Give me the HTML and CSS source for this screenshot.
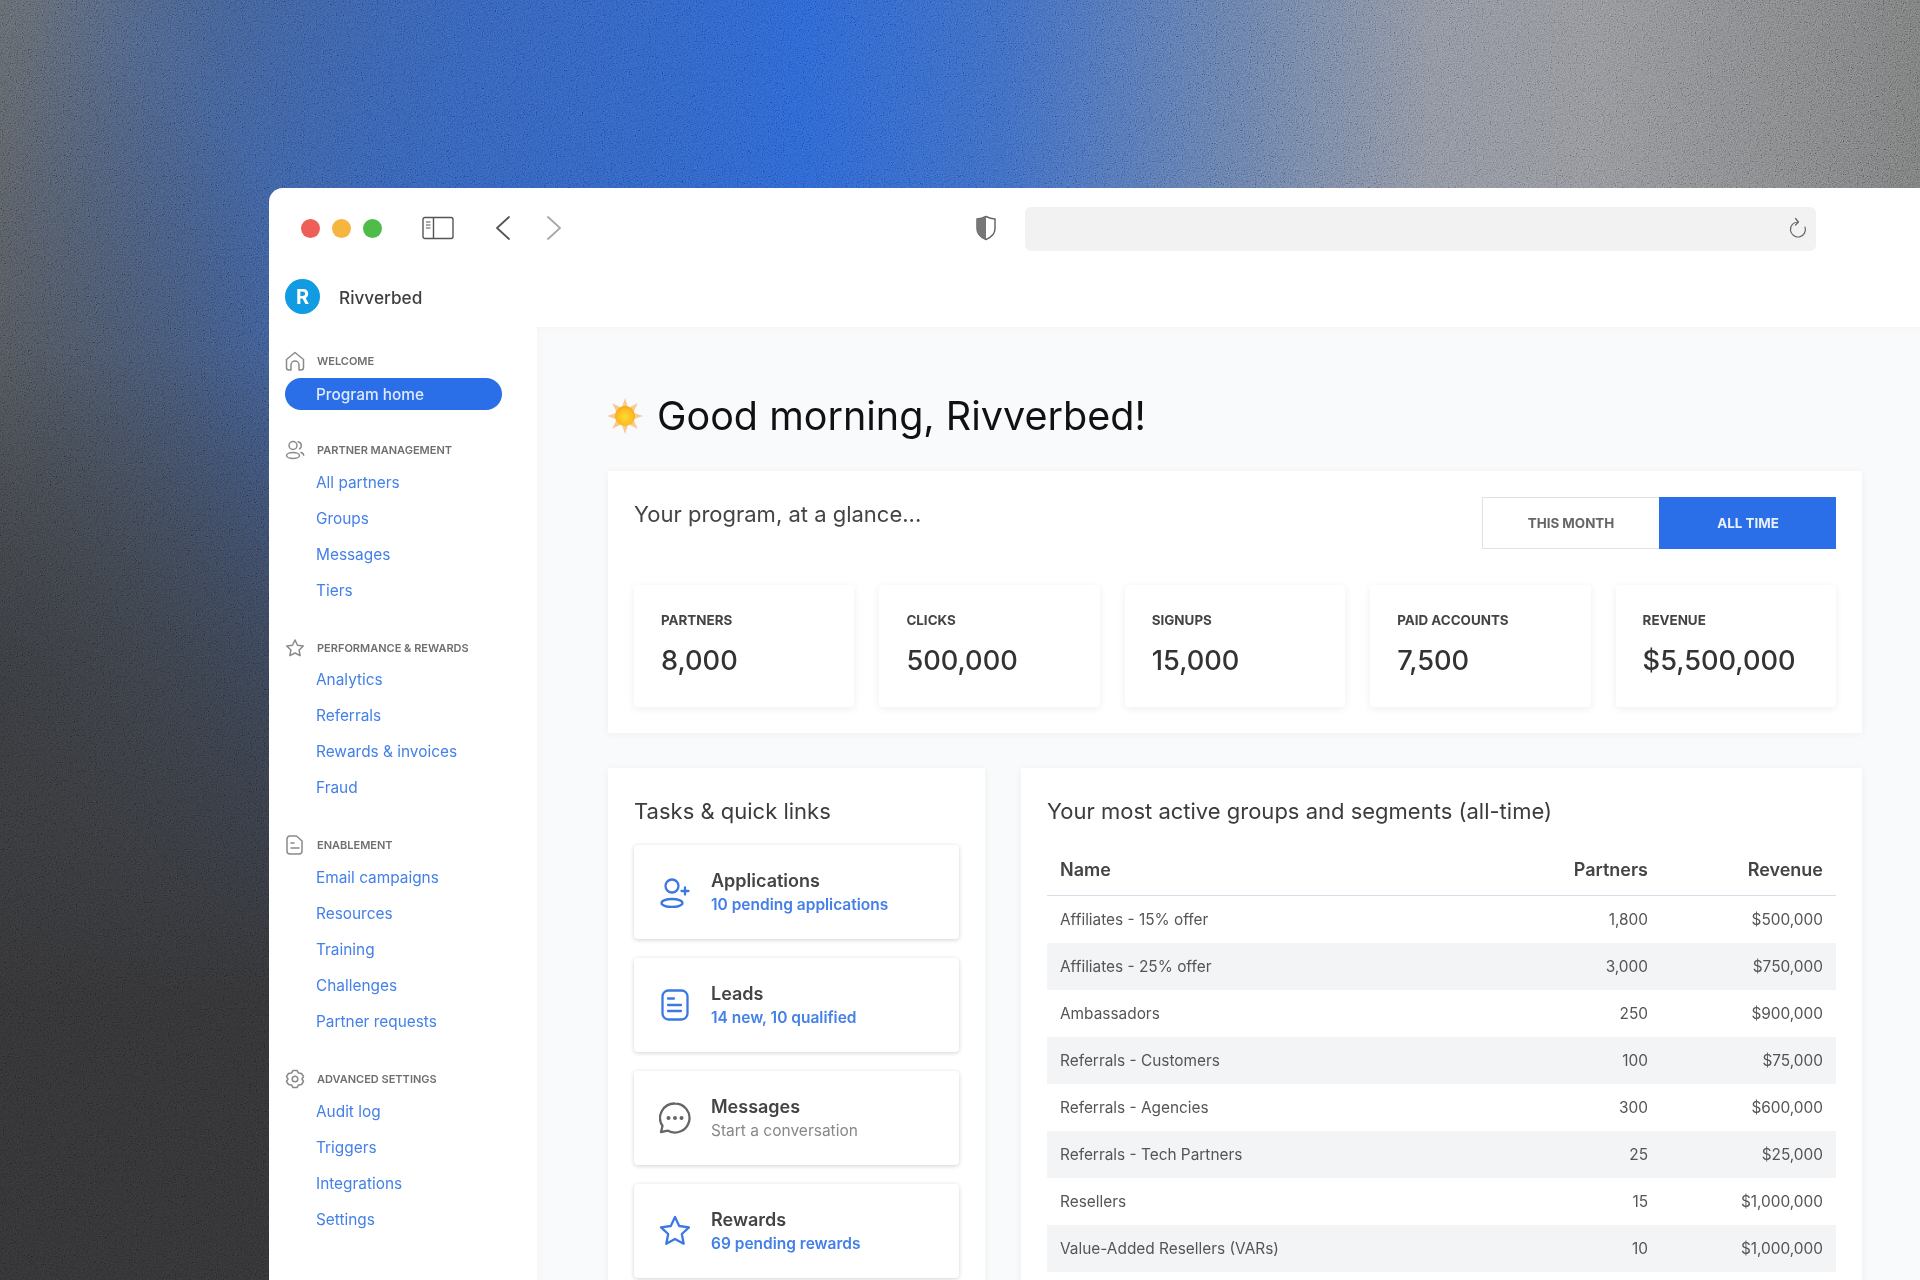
FILE: index.html
```html
<!DOCTYPE html>
<html lang="en">
<head>
<meta charset="utf-8">
<title>Rivverbed</title>
<link rel="stylesheet" href="styles.css">
</head>
<body>
<svg class="grain" width="1920" height="1280" aria-hidden="true"><filter id="n" x="0" y="0" width="100%" height="100%"><feTurbulence type="fractalNoise" baseFrequency="0.85" numOctaves="2" stitchTiles="stitch"/><feColorMatrix type="matrix" values=".7 .7 .7 0 -.72  .7 .7 .7 0 -.72  .7 .7 .7 0 -.72  0 0 0 0 1"/></filter><rect width="1920" height="1280" filter="url(#n)"/></svg>
<div class="window">
  <header class="titlebar">
    <span class="dot red"></span><span class="dot yellow"></span><span class="dot green"></span>
    <svg class="tb-sidebar" width="32" height="24" viewBox="0 0 32 24" fill="none" stroke="#555" stroke-width="1.4"><rect x="1" y="1.500" width="30" height="21" rx="2"/><path d="M11.500 1.500v21"/><path d="M4 6h4.500M4 9h4.500M4 12h4.500" stroke-width="1.200"/></svg>
    <svg class="tb-back" width="16" height="24" viewBox="0 0 16 24" fill="none" stroke="#555" stroke-width="1.800" stroke-linecap="round" stroke-linejoin="round"><path d="M14 1 2 12l12 11"/></svg>
    <svg class="tb-forward" width="16" height="24" viewBox="0 0 16 24" fill="none" stroke="#a8a8a8" stroke-width="1.800" stroke-linecap="round" stroke-linejoin="round"><path d="m2 1 12 11L2 23"/></svg>
    <svg class="tb-shield" width="22" height="26" viewBox="0 0 22 26"><path d="M11 1.500c3 1.600 6 2.400 9 2.600v9.400c0 5-3.600 8.800-9 11-5.400-2.200-9-6-9-11V4.100c3-.2 6-1 9-2.600Z" fill="#fff" stroke="#666" stroke-width="1.500"/><path d="M11 1.500c-3 1.600-6 2.400-9 2.600v9.400c0 5 3.600 8.800 9 11Z" fill="#777"/></svg>
    <div class="address">
      <svg width="20" height="24" viewBox="0 0 20 24" fill="none" stroke="#666" stroke-width="1.200" stroke-linecap="round" stroke-linejoin="round"><path d="M10 5A7.500 7.500 0 1 0 17 10"/><path d="m7.500 1.500 3 3.500-3 3"/></svg>
    </div>
  </header>
  <div class="brandbar">
    <span class="logo">R</span>
    <span class="brand-name">Rivverbed</span>
  </div>
  <div class="body">
    <nav class="sidebar">
      <section class="nav-section first">
        <h4 class="nav-head"><svg width="20" height="20" viewBox="0 0 20 20" fill="none" stroke="#8a8a8a" stroke-width="1.500" stroke-linejoin="round"><path d="M1.500 8.500 10 1.500l8.500 7v8a2.500 2.500 0 0 1-2.500 2.500h-2v-5a4 4 0 0 0-8 0v5H4a2.500 2.500 0 0 1-2.500-2.500Z"/></svg>WELCOME</h4>
        <a class="pill">Program home</a>
      </section>
      <section class="nav-section">
        <h4 class="nav-head"><svg width="20" height="20" viewBox="0 0 20 20" fill="none" stroke="#8a8a8a" stroke-width="1.500" stroke-linecap="round"><circle cx="8" cy="5.500" r="4"/><ellipse cx="8" cy="15.500" rx="6.500" ry="3"/><path d="M13 1.800a3.800 3.800 0 0 1 1.500 7M16 12.500c1.500.5 2.700 1.500 2.700 2.800"/></svg>PARTNER MANAGEMENT</h4>
        <a class="nav-link">All partners</a>
        <a class="nav-link">Groups</a>
        <a class="nav-link">Messages</a>
        <a class="nav-link">Tiers</a>
      </section>
      <section class="nav-section">
        <h4 class="nav-head"><svg width="20" height="20" viewBox="0 0 20 20" fill="none" stroke="#8a8a8a" stroke-width="1.500" stroke-linejoin="round"><path d="m10 2 2.500 5.200 5.800.8-4.200 4 1 5.700L10 15l-5.100 2.700 1-5.700-4.200-4 5.800-.8Z"/></svg>PERFORMANCE &amp; REWARDS</h4>
        <a class="nav-link">Analytics</a>
        <a class="nav-link">Referrals</a>
        <a class="nav-link">Rewards &amp; invoices</a>
        <a class="nav-link">Fraud</a>
      </section>
      <section class="nav-section">
        <h4 class="nav-head"><svg width="20" height="20" viewBox="0 0 20 20" fill="none" stroke="#8a8a8a" stroke-width="1.500" stroke-linecap="round" stroke-linejoin="round"><path d="M5 1h6.500L17 6v10a3 3 0 0 1-3 3H5a3 3 0 0 1-3-3V4a3 3 0 0 1 3-3Z"/><path d="M6 8h3M6 13h8"/></svg>ENABLEMENT</h4>
        <a class="nav-link">Email campaigns</a>
        <a class="nav-link">Resources</a>
        <a class="nav-link">Training</a>
        <a class="nav-link">Challenges</a>
        <a class="nav-link">Partner requests</a>
      </section>
      <section class="nav-section">
        <h4 class="nav-head"><svg width="20" height="20" viewBox="0 0 20 20" fill="none" stroke="#8a8a8a" stroke-width="1.500" stroke-linejoin="round"><path d="M8 1.500h4L13.500 4l3 .5 2 3L17 10l1.500 2.500-2 3-3 .5-1.500 2.500H8L6.500 16l-3-.5-2-3L3 10 1.500 7.500l2-3 3-.5Z"/><circle cx="10" cy="10" r="2.800"/></svg>ADVANCED SETTINGS</h4>
        <a class="nav-link">Audit log</a>
        <a class="nav-link">Triggers</a>
        <a class="nav-link">Integrations</a>
        <a class="nav-link">Settings</a>
      </section>
    </nav>
    <main class="main">
      <h1 class="greeting">
        <svg width="36" height="36" viewBox="0 0 36 36"><defs><radialGradient id="sun" cx=".5" cy=".55" r=".55"><stop offset="0" stop-color="#ffd92e"/><stop offset=".7" stop-color="#fdbe22"/><stop offset="1" stop-color="#f6a11c"/></radialGradient></defs><g fill="#fac98e"><path d="M18 0l3 9h-6zM18 36l3-9h-6zM0 18l9-3v6zM36 18l-9-3v6zM5.300 5.300l8.500 4-4.500 4.500zM30.700 5.300l-4 8.500-4.500-4.500zM5.300 30.700l4-8.500 4.500 4.500zM30.700 30.700l-8.500-4 4.500-4.500z"/></g><circle cx="18" cy="18" r="10" fill="url(#sun)"/></svg>
        <span>Good morning, Rivverbed!</span>
      </h1>
      <section class="panel glance">
        <div class="glance-head">
          <h2 class="glance-title">Your program, at a glance...</h2>
          <div class="toggle"><span class="toggle-btn">THIS MONTH</span><span class="toggle-btn active">ALL TIME</span></div>
        </div>
        <div class="stats">
          <div class="stat"><div class="stat-label">PARTNERS</div><div class="stat-value">8,000</div></div>
          <div class="stat"><div class="stat-label">CLICKS</div><div class="stat-value">500,000</div></div>
          <div class="stat"><div class="stat-label">SIGNUPS</div><div class="stat-value">15,000</div></div>
          <div class="stat"><div class="stat-label">PAID ACCOUNTS</div><div class="stat-value">7,500</div></div>
          <div class="stat"><div class="stat-label">REVENUE</div><div class="stat-value">$5,500,000</div></div>
        </div>
      </section>
      <div class="row">
        <section class="panel tasks">
          <h3 class="panel-title">Tasks &amp; quick links</h3>
          <div class="task">
            <svg width="32" height="32" viewBox="0 0 32 32" fill="none" stroke="#3b78e3" stroke-width="2.300" stroke-linecap="round"><circle cx="13" cy="10" r="6.500"/><ellipse cx="13" cy="27" rx="10.500" ry="4"/><path d="M26 11.500v7M22.500 15h7"/></svg>
            <div class="task-text"><div class="task-title">Applications</div><div class="task-sub">10 pending applications</div></div>
          </div>
          <div class="task">
            <svg width="32" height="32" viewBox="0 0 32 32" fill="none" stroke="#3b78e3" stroke-width="2.300" stroke-linecap="round"><rect x="3.500" y="1.500" width="25" height="29" rx="6"/><path d="M9 9.500h6M9 16h13M9 22h13"/></svg>
            <div class="task-text"><div class="task-title">Leads</div><div class="task-sub">14 new, 10 qualified</div></div>
          </div>
          <div class="task">
            <svg width="32" height="32" viewBox="0 0 32 32" fill="none" stroke="#666" stroke-width="2.300" stroke-linejoin="round"><path d="M16 1.500a14.500 14.500 0 1 1-7 27.200L2 30l1.500-6A14.500 14.500 0 0 1 16 1.500Z"/><circle cx="9.500" cy="16" r="2" fill="#666" stroke="none"/><circle cx="16" cy="16" r="2" fill="#666" stroke="none"/><circle cx="22.500" cy="16" r="2" fill="#666" stroke="none"/></svg>
            <div class="task-text"><div class="task-title">Messages</div><div class="task-sub muted">Start a conversation</div></div>
          </div>
          <div class="task">
            <svg width="32" height="32" viewBox="0 0 32 32" fill="none" stroke="#3b78e3" stroke-width="2.300" stroke-linejoin="round"><path d="m16 2 4.200 9 9.800 1.300-7.200 6.700 1.900 9.700L16 24l-8.700 4.700L9.200 19 2 12.300 11.800 11Z"/></svg>
            <div class="task-text"><div class="task-title">Rewards</div><div class="task-sub">69 pending rewards</div></div>
          </div>
        </section>
        <section class="panel groups">
          <h3 class="panel-title">Your most active groups and segments (all-time)</h3>
          <table class="table">
            <thead><tr><th class="name">Name</th><th>Partners</th><th>Revenue</th></tr></thead>
            <tbody>
              <tr><td class="name">Affiliates - 15% offer</td><td>1,800</td><td>$500,000</td></tr>
              <tr><td class="name">Affiliates - 25% offer</td><td>3,000</td><td>$750,000</td></tr>
              <tr><td class="name">Ambassadors</td><td>250</td><td>$900,000</td></tr>
              <tr><td class="name">Referrals - Customers</td><td>100</td><td>$75,000</td></tr>
              <tr><td class="name">Referrals - Agencies</td><td>300</td><td>$600,000</td></tr>
              <tr><td class="name">Referrals - Tech Partners</td><td>25</td><td>$25,000</td></tr>
              <tr><td class="name">Resellers</td><td>15</td><td>$1,000,000</td></tr>
              <tr><td class="name">Value-Added Resellers (VARs)</td><td>10</td><td>$1,000,000</td></tr>
            </tbody>
          </table>
        </section>
      </div>
    </main>
  </div>
</div>
</body>
</html>
```
FILE: styles.css
```css
* { box-sizing: border-box; }
html, body { margin: 0; height: 1280px; overflow: hidden; }
body {
  position: relative;
  font-family: "Inter", "Liberation Sans", sans-serif;
  padding: 188px 0 0 269px;
  background:
    linear-gradient(to bottom, rgba(52,52,54,0) 350px, rgba(52,54,58,.55) 650px, rgba(52,52,54,1) 1000px),
    radial-gradient(ellipse 400px 700px at 0 700px, #3f4349 0, rgba(63,67,73,0) 100%),
    radial-gradient(ellipse 420px 600px at 420px 260px, rgba(48,100,195,.55) 0, rgba(48,100,195,0) 100%),
    linear-gradient(to right, #656a70 0, #4a6088 220px, #3a62b4 470px, #2e66d2 800px, #3f6cc2 1000px, #6a80aa 1240px, #8f94a0 1430px, #94959a 1600px, #7c7e7e 1920px);
}
.grain { position: absolute; left: 0; top: 0; opacity: .3; mix-blend-mode: overlay; }

.window {
  position: relative;
  width: 1651px;
  height: 1092px;
  background: #fff;
  border-radius: 14px 0 0 0;
  overflow: hidden;
  display: flex;
  flex-direction: column;
  filter: blur(.6px);
}

.titlebar { display: flex; align-items: center; height: 80px; padding-left: 32px; flex: none; }
.dot { width: 19px; height: 19px; border-radius: 50%; margin-right: 12px; }
.red { background: #ee5f58; }
.yellow { background: #f5b53f; }
.green { background: #4fbb48; margin-right: 0; }
.tb-sidebar { margin-left: 40px; }
.tb-back { margin-left: 41px; }
.tb-forward { margin-left: 35px; }
.tb-shield { margin-left: auto; margin-right: 28px; }
.address {
  width: 791px; height: 44px; margin-right: 104px; margin-top: 2px;
  background: #f2f2f2; border-radius: 6px;
  display: flex; align-items: center; justify-content: flex-end; padding-right: 8px;
}

.brandbar { display: flex; align-items: center; height: 59px; padding: 0 0 2px 16px; flex: none; }
.logo {
  width: 35px; height: 35px; border-radius: 50%;
  background: #109be2; color: #fff; font-weight: 700; font-size: 20px;
  display: flex; align-items: center; justify-content: center;
}
.brand-name { margin: 2px 0 0 19px; font-size: 17.2px; color: #3f3f3f; font-weight: 500; }

.body { display: flex; flex: 1; min-height: 0; }
.sidebar { width: 268px; flex: none; padding: 24px 0 0 16px; }
.nav-section { margin-bottom: 29.7px; }
.nav-section.first { margin-bottom: 30px; }
.nav-head {
  display: flex; align-items: center; gap: 12px; margin: 0; height: 20px;
  font-size: 11px; font-weight: 600; color: #6f6f6f; letter-spacing: 0;
}
.nav-link {
  display: flex; align-items: center; height: 36px; padding-left: 31px;
  font-size: 15.4px; color: #4480e8;
}
.nav-head + .nav-link { margin-top: 4px; }
.pill {
  display: flex; align-items: center; width: 217px; height: 32px; margin-top: 7px; margin-bottom: 1px; padding-left: 31px;
  background: #2a6fe8; border-radius: 16px; color: #dfe9ff; font-size: 15.4px; font-weight: 500;
}

.main {
  flex: 1; min-width: 0; background: #f9fafb; padding: 65px 58px 0 71px;
  box-shadow: inset 4px 4px 6px -2px #f5f5f6;
}
.greeting {
  display: flex; align-items: center; gap: 14px; margin: 0 0 31px -1px; height: 48px;
  font-size: 39.500px; font-weight: 400; color: #111;
}
.panel { background: #fff; box-shadow: 0 1px 8px rgba(20,30,50,.05); padding: 26px; }
.glance { height: 262px; }
.glance-head { display: flex; justify-content: space-between; height: 52px; margin-bottom: 36px; }
.glance-title { margin: 0; font-size: 22px; line-height: 34px; font-weight: 400; color: #444; }
.toggle { display: flex; }
.toggle-btn {
  width: 177px; display: flex; align-items: center; justify-content: center;
  font-size: 13.400px; font-weight: 700; color: #666;
  border: 1px solid #e2e2e4; border-right: 0;
}
.toggle-btn.active { background: #2a6fe8; border-color: #2a6fe8; color: #e8f0ff; }
.stats { display: grid; grid-template-columns: repeat(5, 1fr); gap: 25px; }
.stat {
  height: 122px; padding: 27px 27px 0; background: #fff; border-radius: 4px;
  box-shadow: 0 2px 8px rgba(20,30,50,.07);
}
.stat-label { font-size: 13.400px; line-height: 16px; font-weight: 700; color: #444; }
.stat-value { margin-top: 15px; font-size: 27.200px; line-height: 36px; font-weight: 500; color: #333; }

.row { display: grid; grid-template-columns: 377px 1fr; gap: 36px; margin-top: 35px; }
.tasks, .groups { padding-top: 29px; height: 520px; }
.panel-title { margin: 0 0 20px; font-size: 22px; line-height: 28px; font-weight: 400; color: #3c3c3c; }
.task {
  display: flex; align-items: center; gap: 20px; height: 94px; margin-bottom: 19px; padding-left: 25px;
  background: #fff; border-radius: 4px; box-shadow: 0 1px 4px rgba(20,30,50,.2);
}
.task svg { flex: none; }
.task-text { padding-top: 2px; }
.task-title { font-size: 18px; line-height: 24px; font-weight: 600; color: #444; }
.task-sub { font-size: 15.500px; line-height: 24px; font-weight: 600; color: #4480e8; }
.task-sub.muted { font-weight: 400; color: #888; }

.table { width: 100%; border-collapse: collapse; margin-top: -1px; font-size: 15.400px; color: #555; }
.table th { height: 51px; font-size: 18px; font-weight: 600; color: #444; text-align: right; border-bottom: 1px solid #d6dfe8; padding-right: 13px; }
.table td { height: 47px; padding: 0 13px 0 0; text-align: right; }
.table tbody tr:first-child td { height: 48px; }
.table th.name, .table td.name { text-align: left; padding-left: 13px; }
.table th:last-child { width: 175px; }
.table th:nth-child(2) { width: 161px; }
.table tbody tr:nth-child(even) { background: #f3f4f5; }
```
